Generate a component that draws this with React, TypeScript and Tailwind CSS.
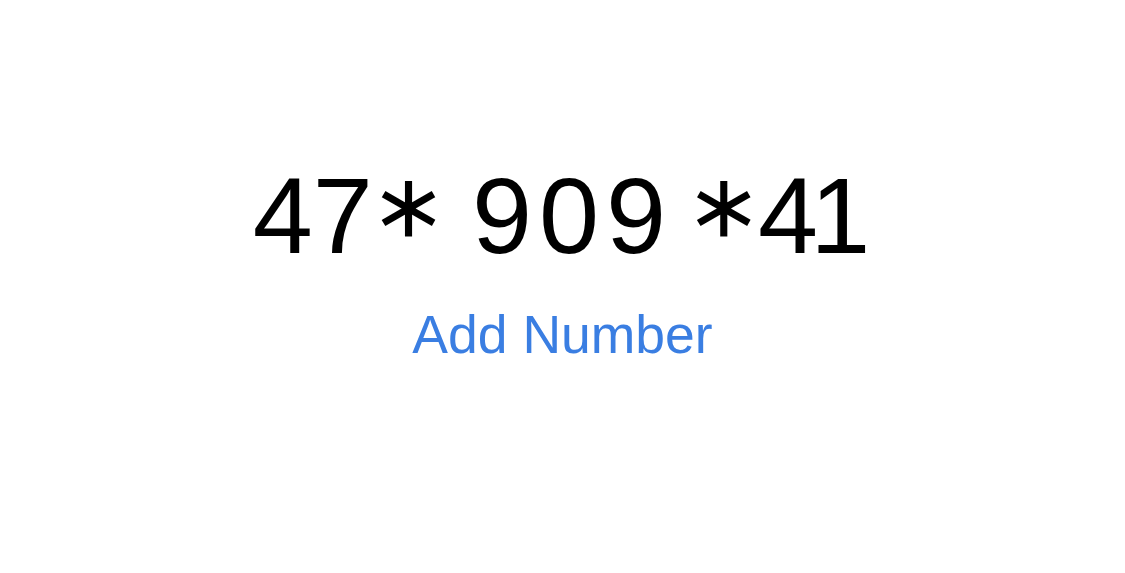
import React from 'react';

// six-armed operator asterisk, thin DejaVu weight thickened with a stroke
const Star: React.FC<{ className?: string }> = ({ className = '' }) => (
  <span className={`flex justify-center w-[52px] ${className}`}>
    <span className="relative top-[-9px] font-['DejaVu_Sans',sans-serif] font-extralight text-[112px] leading-[80px] [-webkit-text-stroke:4.5px_#000]">
      &#8727;
    </span>
  </span>
);

const App: React.FC = () => {
  return (
    <div className="w-full h-[573px] bg-white flex flex-col items-center pt-[162px] font-['Liberation_Sans',Arial,sans-serif]">
      <div className="flex items-baseline pr-[10px] text-[108px] leading-none text-black">
        <span>47</span>
        <Star className="ml-[10px]" />
        <span className="ml-[37px] tracking-[7px]">909</span>
        <Star className="ml-[25px]" />
        <span className="ml-[8px] tracking-[-8px]">41</span>
      </div>
      <button className="mt-[38px] text-[53.5px] leading-none text-[#3a7ee2]">Add Number</button>
    </div>
  );
};

export default App;
